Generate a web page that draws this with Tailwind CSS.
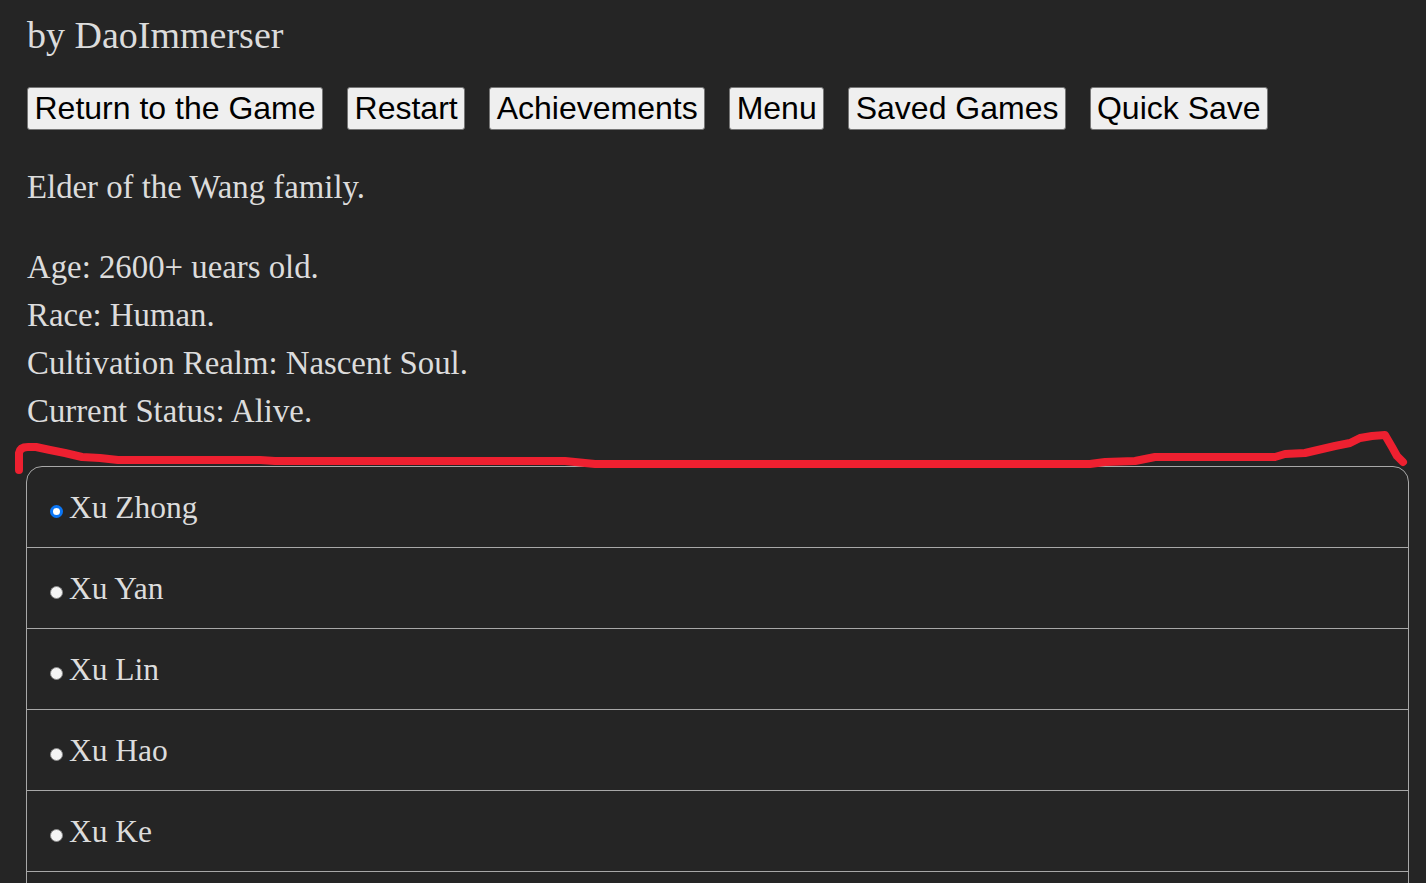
<!DOCTYPE html>
<html lang="en">

<head>
    <meta charset="utf-8" />
    <title>by DaoImmerser</title>
    <script src="https://cdn.jsdelivr.net/npm/@tailwindcss/browser@4"></script>
</head>

<body class="relative h-[883px] overflow-hidden bg-[#252525] text-[#dcdcdc] font-['Liberation_Serif',serif]">
    <div class="pl-[27px] pr-[17px]">
        <p class="pt-[13px] h-[87px] text-[38px] leading-[44px]">by DaoImmerser</p>
        <div class="flex gap-[24px] font-['Liberation_Sans',sans-serif] text-[32px] leading-[40px] text-black">
            <button class="h-[43px] pb-[2px] px-[6.5px] bg-[#efefef] border border-[#767676] rounded-[3px]">Return to the Game</button>
            <button class="h-[43px] pb-[2px] px-[6.5px] bg-[#efefef] border border-[#767676] rounded-[3px]">Restart</button>
            <button class="h-[43px] pb-[2px] px-[6.5px] bg-[#efefef] border border-[#767676] rounded-[3px]">Achievements</button>
            <button class="h-[43px] pb-[2px] px-[6.5px] bg-[#efefef] border border-[#767676] rounded-[3px]">Menu</button>
            <button class="h-[43px] pb-[2px] px-[6.5px] bg-[#efefef] border border-[#767676] rounded-[3px]">Saved Games</button>
            <button class="h-[43px] pb-[2px] px-[6px] bg-[#efefef] border border-[#767676] rounded-[3px]">Quick Save</button>
        </div>
        <div class="text-[32.8px] leading-[48px]">
            <p class="mt-[33px]">Elder of the Wang family.</p>
            <p class="mt-[32px]">Age: 2600+ uears old.</p>
            <p>Race: Human.</p>
            <p>Cultivation Realm: Nascent Soul.</p>
            <p>Current Status: Alive.</p>
        </div>

        <div class="mt-[31px] -ml-px border border-[#a8a8a8] rounded-[16px] text-[31.5px] leading-[48px]">
            <label class="flex items-center h-[80px] pl-[23px] gap-[6px]">
                <span class="w-[13px] h-[13px] mt-[8px] rounded-full bg-white border-[3px] border-[#0b76f5]"></span><span class="mt-[1px]">Xu Zhong</span>
            </label>
            <label class="flex items-center h-[81px] pl-[23px] gap-[6px] border-t border-[#a8a8a8]">
                <span class="w-[13px] h-[13px] mt-[8px] rounded-full bg-[#f4f4f4] border border-[#8a8a8a]"></span><span class="mt-[1px]">Xu Yan</span>
            </label>
            <label class="flex items-center h-[81px] pl-[23px] gap-[6px] border-t border-[#a8a8a8]">
                <span class="w-[13px] h-[13px] mt-[8px] rounded-full bg-[#f4f4f4] border border-[#8a8a8a]"></span><span class="mt-[1px]">Xu Lin</span>
            </label>
            <label class="flex items-center h-[81px] pl-[23px] gap-[6px] border-t border-[#a8a8a8]">
                <span class="w-[13px] h-[13px] mt-[8px] rounded-full bg-[#f4f4f4] border border-[#8a8a8a]"></span><span class="mt-[1px]">Xu Hao</span>
            </label>
            <label class="flex items-center h-[81px] pl-[23px] gap-[6px] border-t border-[#a8a8a8]">
                <span class="w-[13px] h-[13px] mt-[8px] rounded-full bg-[#f4f4f4] border border-[#8a8a8a]"></span><span class="mt-[1px]">Xu Ke</span>
            </label>
            <label class="flex items-center h-[81px] border-t border-[#a8a8a8]"></label>
        </div>
    </div>

    <!-- hand drawn red line over the page -->
    <svg class="absolute left-0 top-0 pointer-events-none" width="1426" height="883" viewBox="0 0 1426 883" fill="none">
        <path d="M19 470 L19 453 Q20 447 28 447 L36 447 L50 450 L65 453 L82 457 L100 458 L118 460 L260 460 L275 461 L565 461 L595 464 L1090 464 L1105 462 L1135 461 L1155 457 L1275 457 L1285 454 L1305 453 L1335 446 L1350 443 L1360 438 L1372 436 L1385 435 L1392 447 L1397 456 L1403 462" stroke="#ee2030" stroke-width="8" stroke-linecap="round" stroke-linejoin="round" />
    </svg>
</body>

</html>
